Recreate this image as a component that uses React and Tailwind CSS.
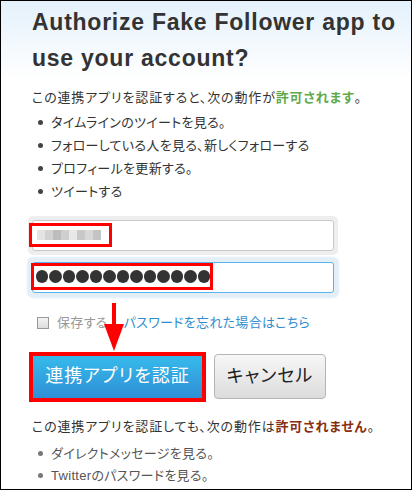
import React from "react";

const jp = { fontFamily: '"Liberation Sans", "Noto Sans CJK JP", sans-serif' };

const Dot = () => <span className="inline-block h-[13px] w-[13px] rounded-full bg-[#333]" />;

export default function App() {
  const allowed = ["タイムラインのツイートを見る。", "フォローしている人を見る、新しくフォローする", "プロフィールを更新する。", "ツイートする"];
  const denied = ["ダイレクトメッセージを見る。", "Twitterのパスワードを見る。"];

  return (
    <div
      style={jp}
      className="relative box-border h-[490px] w-[412px] overflow-hidden border border-black bg-[linear-gradient(to_bottom,#e4f1fb_0px,#ffffff_78px)] text-[#333]"
    >
      <h1 className="pl-[31px] pt-[3px] text-[23px] font-bold leading-[36px] tracking-[0.75px] text-[#333]">
        Authorize Fake Follower app to
        <br />
        use your account?
      </h1>

      <div className="pl-[31px] pt-[12px] text-[13px] [font-feature-settings:'palt']">
        <p className="leading-[20px] tracking-[0.85px]">
          この連携アプリを認証すると、次の動作が<span className="font-bold text-[#62a94a]">許可されます</span>。
        </p>
        <ul className="mt-[3px] tracking-[0.3px]">
          {allowed.map(t => (
            <li key={t} className="flex h-[23px] items-center">
              <span className="ml-[6px] mr-[8px] h-[5px] w-[5px] rounded-full bg-[#444]" />
              {t}
            </li>
          ))}
        </ul>

        <div className="mt-[13px] w-[310px] rounded-[5px] bg-[#eeeeee] p-[4px] -ml-[4px]">
          <div className="relative h-[31px] rounded-[3px] border border-[#c8c8c8] bg-white">
            <div className="absolute left-[-4px] top-[2px] flex h-[24px] w-[83px] items-center border-[3px] border-[#ff0000] bg-white pl-[5px]">
              <div className="flex h-[10px] gap-0">
                <span className="w-[8px] bg-[#e4e4e4]" />
                <span className="w-[8px] bg-[#d2d2d2]" />
                <span className="w-[8px] bg-[#bdbdbd]" />
                <span className="w-[8px] bg-[#cfcfcf]" />
                <span className="w-[8px] bg-[#e8e8e8]" />
                <span className="w-[8px] bg-[#c8c8c8]" />
                <span className="w-[8px] bg-[#d8d8d8]" />
                <span className="w-[8px] bg-[#c4c4c4]" />
              </div>
            </div>
          </div>
        </div>

        <div className="mt-[3px] w-[310px] rounded-[5px] bg-[#e6eef5] p-[4px] -ml-[4px] shadow-[0_0_3px_#b9dcf3]">
          <div className="relative h-[31px] rounded-[3px] border border-[#56b4ef] bg-white">
            <div className="absolute left-[-2px] top-[0px] flex h-[27px] w-[182px] items-center gap-[1px] border-[3px] border-[#ff0000] bg-white pl-[2px]">
              {Array.from({ length: 13 }).map((_, i) => (
                <Dot key={i} />
              ))}
            </div>
          </div>
        </div>

        <div className="mt-[16px] flex items-center text-[13px] tracking-[0.3px]">
          <span className="ml-[5px] mr-[8px] inline-block h-[12px] w-[12px] border border-[#999] bg-[linear-gradient(to_bottom,#f4f4f4,#dcdcdc)]" />
          <span className="text-[#999]">保存する</span>
          <a className="ml-[16px] text-[#2f8dd0]">パスワードを忘れた場合はこちら</a>
        </div>

        <div className="mt-[19px] flex items-center gap-[8px] -ml-[3px]">
          <div className="border-[4px] border-[#ff0000]">
            <button className="h-[42px] w-[169px] bg-[linear-gradient(to_bottom,#36baeb,#2f8fd6)] text-[18px] tracking-[1px] text-white">
              連携アプリを認証
            </button>
          </div>
          <button className="h-[45px] w-[112px] rounded-[4px] border border-[#b4b4b4] bg-[linear-gradient(to_bottom,#f7f7f7,#dcdcdc)] text-[18px] tracking-[1px] text-[#222]">
            キャンセル
          </button>
        </div>

        <p className="mt-[15px] leading-[20px] tracking-[0.85px]">
          この連携アプリを認証しても、次の動作は<span className="font-bold text-[#8a2f0e]">許可されません</span>。
        </p>
        <ul className="mt-[6px] tracking-[0.3px] text-[#555]">
          {denied.map(t => (
            <li key={t} className="flex h-[22px] items-center">
              <span className="ml-[6px] mr-[8px] h-[5px] w-[5px] rounded-full bg-[#777]" />
              {t}
            </li>
          ))}
        </ul>
      </div>

      {/* red arrow annotation */}
      <div className="absolute left-[111px] top-[302px] h-[24px] w-[4px] bg-[#ff0000]" />
      <svg className="absolute left-[103px] top-[323px]" width="20" height="27" viewBox="0 0 20 27">
        <polygon points="0,0 20,0 10,27" fill="#ff0000" />
      </svg>
    </div>
  );
}
